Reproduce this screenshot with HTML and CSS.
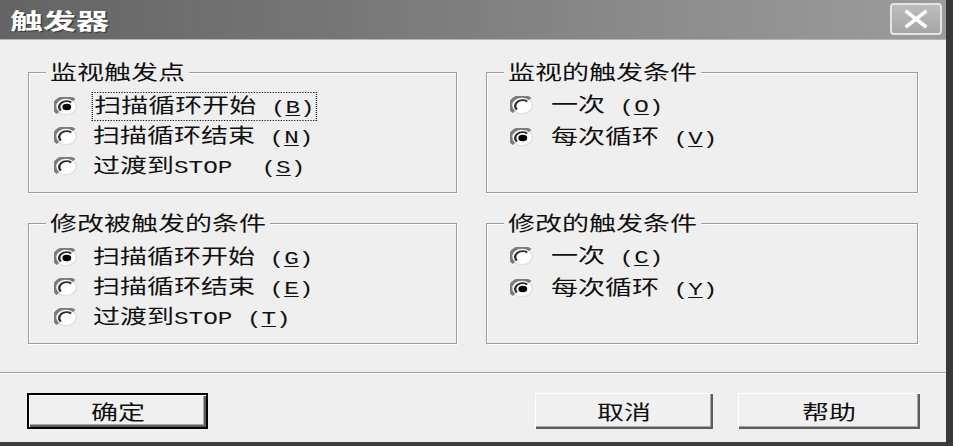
FILE: index.html
```html
<!DOCTYPE html>
<html lang="zh-CN">
<head>
<meta charset="utf-8">
<title>触发器</title>
<link rel="stylesheet" href="styles.css">
</head>
<body>
<div class="window">
  <header class="titlebar">
    <h1 class="title"><span>触发器</span></h1>
    <button class="close" aria-label="关闭">
      <svg width="26" height="20" viewBox="0 0 26 20"><path d="M4 3L22 17M22 3L4 17" stroke="#fff" stroke-width="3.6" stroke-linecap="square" fill="none"/></svg>
    </button>
  </header>
  <main class="content">
    <div class="groups">
      <section class="group left">
        <h2 class="legend"><span>监视触发点</span></h2>
        <ul class="opts">
          <li class="opt"><svg class="radio" viewBox="0 0 12 12" preserveAspectRatio="none"><circle cx="6" cy="6" r="5.2" fill="#fff" stroke="#e2e2e2" stroke-width="0.8"/><path d="M1.9 10.1A5.6 5.6 0 0 1 10.1 1.9" fill="none" stroke="#7c7c7c" stroke-width="1.8"/><path d="M3.4 8.6A3.7 3.7 0 0 1 8.6 3.4" fill="none" stroke="#2e2e2e" stroke-width="1.2"/><ellipse cx="6.4" cy="6.3" rx="2.2" ry="2" fill="#000"/></svg><span class="lbl focus">扫描循环开始<span class="lat"> (<u>B</u>)</span></span></li>
          <li class="opt"><svg class="radio" viewBox="0 0 12 12" preserveAspectRatio="none"><circle cx="6" cy="6" r="5.2" fill="#fff" stroke="#e2e2e2" stroke-width="0.8"/><path d="M1.9 10.1A5.6 5.6 0 0 1 10.1 1.9" fill="none" stroke="#7c7c7c" stroke-width="1.8"/><path d="M3.4 8.6A3.7 3.7 0 0 1 8.6 3.4" fill="none" stroke="#2e2e2e" stroke-width="1.2"/></svg><span class="lbl">扫描循环结束<span class="lat"> (<u>N</u>)</span></span></li>
          <li class="opt"><svg class="radio" viewBox="0 0 12 12" preserveAspectRatio="none"><circle cx="6" cy="6" r="5.2" fill="#fff" stroke="#e2e2e2" stroke-width="0.8"/><path d="M1.9 10.1A5.6 5.6 0 0 1 10.1 1.9" fill="none" stroke="#7c7c7c" stroke-width="1.8"/><path d="M3.4 8.6A3.7 3.7 0 0 1 8.6 3.4" fill="none" stroke="#2e2e2e" stroke-width="1.2"/></svg><span class="lbl">过渡到<span class="lat">STOP  (<u>S</u>)</span></span></li>
        </ul>
      </section>
      <section class="group right">
        <h2 class="legend"><span>监视的触发条件</span></h2>
        <ul class="opts">
          <li class="opt"><svg class="radio" viewBox="0 0 12 12" preserveAspectRatio="none"><circle cx="6" cy="6" r="5.2" fill="#fff" stroke="#e2e2e2" stroke-width="0.8"/><path d="M1.9 10.1A5.6 5.6 0 0 1 10.1 1.9" fill="none" stroke="#7c7c7c" stroke-width="1.8"/><path d="M3.4 8.6A3.7 3.7 0 0 1 8.6 3.4" fill="none" stroke="#2e2e2e" stroke-width="1.2"/></svg><span class="lbl">一次<span class="lat"> (<u>O</u>)</span></span></li>
          <li class="opt"><svg class="radio" viewBox="0 0 12 12" preserveAspectRatio="none"><circle cx="6" cy="6" r="5.2" fill="#fff" stroke="#e2e2e2" stroke-width="0.8"/><path d="M1.9 10.1A5.6 5.6 0 0 1 10.1 1.9" fill="none" stroke="#7c7c7c" stroke-width="1.8"/><path d="M3.4 8.6A3.7 3.7 0 0 1 8.6 3.4" fill="none" stroke="#2e2e2e" stroke-width="1.2"/><ellipse cx="6.4" cy="6.3" rx="2.2" ry="2" fill="#000"/></svg><span class="lbl">每次循环<span class="lat"> (<u>V</u>)</span></span></li>
        </ul>
      </section>
      <section class="group left">
        <h2 class="legend"><span>修改被触发的条件</span></h2>
        <ul class="opts">
          <li class="opt"><svg class="radio" viewBox="0 0 12 12" preserveAspectRatio="none"><circle cx="6" cy="6" r="5.2" fill="#fff" stroke="#e2e2e2" stroke-width="0.8"/><path d="M1.9 10.1A5.6 5.6 0 0 1 10.1 1.9" fill="none" stroke="#7c7c7c" stroke-width="1.8"/><path d="M3.4 8.6A3.7 3.7 0 0 1 8.6 3.4" fill="none" stroke="#2e2e2e" stroke-width="1.2"/><ellipse cx="6.4" cy="6.3" rx="2.2" ry="2" fill="#000"/></svg><span class="lbl">扫描循环开始<span class="lat"> (<u>G</u>)</span></span></li>
          <li class="opt"><svg class="radio" viewBox="0 0 12 12" preserveAspectRatio="none"><circle cx="6" cy="6" r="5.2" fill="#fff" stroke="#e2e2e2" stroke-width="0.8"/><path d="M1.9 10.1A5.6 5.6 0 0 1 10.1 1.9" fill="none" stroke="#7c7c7c" stroke-width="1.8"/><path d="M3.4 8.6A3.7 3.7 0 0 1 8.6 3.4" fill="none" stroke="#2e2e2e" stroke-width="1.2"/></svg><span class="lbl">扫描循环结束<span class="lat"> (<u>E</u>)</span></span></li>
          <li class="opt"><svg class="radio" viewBox="0 0 12 12" preserveAspectRatio="none"><circle cx="6" cy="6" r="5.2" fill="#fff" stroke="#e2e2e2" stroke-width="0.8"/><path d="M1.9 10.1A5.6 5.6 0 0 1 10.1 1.9" fill="none" stroke="#7c7c7c" stroke-width="1.8"/><path d="M3.4 8.6A3.7 3.7 0 0 1 8.6 3.4" fill="none" stroke="#2e2e2e" stroke-width="1.2"/></svg><span class="lbl">过渡到<span class="lat">STOP (<u>T</u>)</span></span></li>
        </ul>
      </section>
      <section class="group right">
        <h2 class="legend"><span>修改的触发条件</span></h2>
        <ul class="opts">
          <li class="opt"><svg class="radio" viewBox="0 0 12 12" preserveAspectRatio="none"><circle cx="6" cy="6" r="5.2" fill="#fff" stroke="#e2e2e2" stroke-width="0.8"/><path d="M1.9 10.1A5.6 5.6 0 0 1 10.1 1.9" fill="none" stroke="#7c7c7c" stroke-width="1.8"/><path d="M3.4 8.6A3.7 3.7 0 0 1 8.6 3.4" fill="none" stroke="#2e2e2e" stroke-width="1.2"/></svg><span class="lbl">一次<span class="lat"> (<u>C</u>)</span></span></li>
          <li class="opt"><svg class="radio" viewBox="0 0 12 12" preserveAspectRatio="none"><circle cx="6" cy="6" r="5.2" fill="#fff" stroke="#e2e2e2" stroke-width="0.8"/><path d="M1.9 10.1A5.6 5.6 0 0 1 10.1 1.9" fill="none" stroke="#7c7c7c" stroke-width="1.8"/><path d="M3.4 8.6A3.7 3.7 0 0 1 8.6 3.4" fill="none" stroke="#2e2e2e" stroke-width="1.2"/><ellipse cx="6.4" cy="6.3" rx="2.2" ry="2" fill="#000"/></svg><span class="lbl">每次循环<span class="lat"> (<u>Y</u>)</span></span></li>
        </ul>
      </section>
    </div>
    <div class="sep"></div>
    <div class="buttons">
      <button class="btn ok"><span>确定</span></button>
      <button class="btn cancel"><span>取消</span></button>
      <button class="btn help"><span>帮助</span></button>
    </div>
  </main>
</div>
</body>
</html>
```

FILE: styles.css
```css
html, body {
  margin: 0;
  padding: 0;
}
body {
  width: 953px;
  height: 446px;
  overflow: hidden;
  background: #efefef;
  color: #111;
  font-family: "Noto Sans CJK SC", sans-serif;
}
.window {
  width: 953px;
  height: 446px;
  box-sizing: border-box;
  border-right: 7px solid #383838;
  border-bottom: 4px solid #3c3c3c;
  background: #efefef;
  display: flex;
  flex-direction: column;
}
.titlebar {
  height: 40px;
  flex: none;
  box-sizing: border-box;
  display: flex;
  justify-content: space-between;
  align-items: flex-start;
  background: linear-gradient(to right, #646464 0%, #767676 35%, #8c8c8c 70%, #9c9c9c 100%);
  border-bottom: 1px solid #b4b4b4;
}
.title {
  margin: 0;
  padding-left: 10px;
  height: 39px;
  line-height: 39px;
  font-size: 22px;
  font-weight: bold;
}
.title span {
  display: inline-block;
  color: #fff;
  text-shadow: 1px 1px 0 #3a3a3a;
  transform: scaleX(1.5);
  transform-origin: left center;
}
.close {
  margin: 3px 4px 0 0;
  width: 52px;
  height: 32px;
  box-sizing: border-box;
  padding: 0;
  border: 2px solid #e4e4e4;
  border-radius: 4px;
  background: linear-gradient(#bdbdbd, #a6a6a6);
  display: flex;
  align-items: center;
  justify-content: center;
}
.content {
  flex: 1;
  display: flex;
  flex-direction: column;
  padding-top: 32px;
}
.groups {
  display: grid;
  grid-template-columns: 429px 432px;
  column-gap: 29px;
  row-gap: 30px;
  padding: 0 28px;
}
.group {
  height: 121px;
  box-sizing: border-box;
  border: 1px solid #9c9c9c;
  box-shadow: inset 1px 1px 0 #fff, 1px 1px 0 #fff;
}
.legend {
  margin: -13px 0 0 17px;
  height: 24px;
  line-height: 24px;
  font-size: 20px;
  font-weight: normal;
}
.legend span {
  display: inline-block;
  padding: 0 3px;
  background: #efefef;
  transform: scaleX(1.35);
  transform-origin: left center;
}
.opts {
  list-style: none;
  margin: 0;
  padding: 7px 0 0 25px;
}
.right .opts {
  padding: 5px 0 0 23px;
}
.opt {
  height: 30px;
  display: flex;
  align-items: center;
}
.right .opt {
  height: 32px;
}
.radio {
  width: 24px;
  height: 19px;
  flex: none;
  margin-right: 15px;
}
.right .radio {
  margin-right: 17px;
}
.lbl {
  display: inline-block;
  font-size: 20px;
  line-height: 24px;
  white-space: pre;
  transform: scaleX(1.35);
  transform-origin: left center;
}
.lat {
  font-family: "Liberation Mono", monospace;
  font-size: 18px;
}
.lat u {
  text-underline-offset: 2px;
}
.focus {
  outline: 1px dotted #222;
  padding: 0 1px;
}
.sep {
  margin-top: 28px;
  height: 1px;
  background: #a0a0a0;
  border-bottom: 1px solid #fff;
}
.buttons {
  display: flex;
  margin-top: 19px;
  padding: 0 26px 0 27px;
}
.btn {
  height: 36px;
  box-sizing: border-box;
  padding: 0;
  border: none;
  background: #f0f0f0;
  color: #111;
  font-family: inherit;
  font-size: 20px;
  box-shadow: inset 1px 1px 0 #fff, inset -2px -2px 0 #5c5c5c, inset -3px -3px 0 #a8a8a8;
}
.btn span {
  display: inline-block;
  transform: scaleX(1.35);
}
.ok {
  width: 181px;
  border: 2px solid #000;
}
.cancel {
  width: 178px;
  margin-left: auto;
}
.help {
  width: 182px;
  margin-left: 25px;
}
```
